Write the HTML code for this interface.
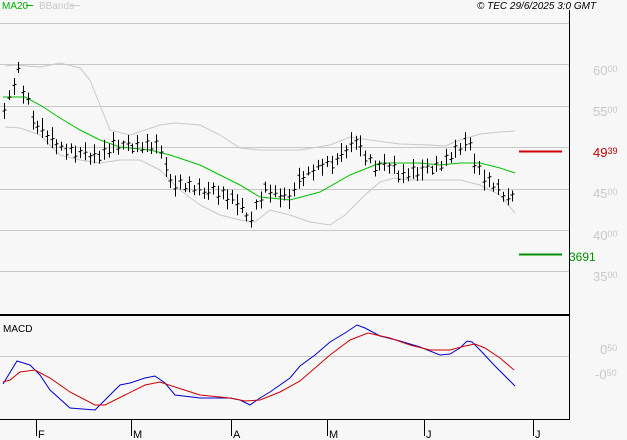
<!DOCTYPE html>
<html><head><meta charset="utf-8"><style>
body{margin:0;background:#f7f7f7;width:627px;height:440px;overflow:hidden;font-family:"Liberation Sans",sans-serif}
svg{display:block}
</style></head><body>
<svg id="s" width="627" height="440" xmlns="http://www.w3.org/2000/svg" font-family="Liberation Sans, sans-serif">
<rect width="627" height="440" fill="#f7f7f7"/>
<g stroke="#c8c8c8" stroke-width="1">
<line x1="0" y1="23.5" x2="569" y2="23.5"/>
<line x1="0" y1="64.5" x2="569" y2="64.5"/>
<line x1="0" y1="106.5" x2="569" y2="106.5"/>
<line x1="0" y1="147.5" x2="569" y2="147.5"/>
<line x1="0" y1="189.5" x2="569" y2="189.5"/>
<line x1="0" y1="230.5" x2="569" y2="230.5"/>
<line x1="0" y1="271.5" x2="569" y2="271.5"/>
<line x1="0" y1="356.5" x2="569" y2="356.5"/>
</g>
<g fill="#c8c8c8" font-size="13">
<text x="593" y="75">60<tspan font-size="9" dy="-3">00</tspan></text>
<text x="593" y="116">55<tspan font-size="9" dy="-3">00</tspan></text>
<text x="593" y="198">45<tspan font-size="9" dy="-3">00</tspan></text>
<text x="593" y="240">40<tspan font-size="9" dy="-3">00</tspan></text>
<text x="593" y="281">35<tspan font-size="9" dy="-3">00</tspan></text>
<text x="600" y="354">0<tspan font-size="9" dy="-3">50</tspan></text>
<text x="595" y="379">-0<tspan font-size="9" dy="-3">50</tspan></text>
</g>
<text x="593" y="157" fill="#c00000" font-size="13">49<tspan font-size="9" dy="-3">39</tspan></text>
<text x="569" y="261" fill="#009000" font-size="12">3691</text>
<line x1="519" y1="151.5" x2="562" y2="151.5" stroke="#d00000" stroke-width="2"/>
<line x1="519" y1="254.5" x2="562" y2="254.5" stroke="#009000" stroke-width="2"/>
<polyline fill="none" stroke="#c8c8c8" points="5,66 15,65 40,67 60,63 80,68 90,80 100,105 110,130 130,135 145,130 160,125 175,123 200,125 220,135 240,148 260,150 300,150 330,145 350,137 370,140 400,144 430,145 445,146 460,140 480,134 500,132 515,131"/>
<polyline fill="none" stroke="#c8c8c8" points="5,127 20,128 40,135 50,145 60,155 80,160 100,163 120,160 140,160 150,165 160,170 180,190 200,205 220,215 240,220 255,222 270,210 290,215 310,222 330,225 345,215 355,205 365,195 380,182 395,178 410,180 430,180 460,180 480,185 500,195 515,213"/>
<polyline fill="none" stroke="#00c000" points="3,97 25,97 40,105 60,118 80,130 100,140 120,147 150,150 170,155 200,165 220,175 240,185 260,197 290,200 320,192 350,175 380,163 420,163 440,165 460,163 480,163 500,168 515,173"/>
<g id="bars" stroke="#000" stroke-width="1" fill="none"></g>
<line x1="0" y1="315" x2="570" y2="315" stroke="#000" stroke-width="2"/>
<line x1="569.5" y1="10" x2="569.5" y2="420" stroke="#000"/>
<line x1="0" y1="419.5" x2="570" y2="419.5" stroke="#000"/>
<text x="3" y="332" font-size="10" fill="#000">MACD</text>
<polyline fill="none" stroke="#0000d0" points="3,384 17,361 30,365 40,375 50,390 70,408 95,410 105,400 120,385 130,383 145,378 155,376 165,383 175,395 200,398 230,398 240,400 250,405 260,398 270,392 280,385 290,378 300,366 315,355 330,342 345,333 357,325 365,328 380,336 400,341 420,347 440,355 450,354 460,348 467,341 472,342 480,350 495,366 515,386"/>
<polyline fill="none" stroke="#d00000" points="3,382 10,380 20,372 35,370 50,378 70,392 95,405 105,405 125,395 145,385 160,382 175,387 200,395 230,398 245,401 260,400 280,392 300,381 315,368 330,355 350,340 368,333 390,338 410,345 430,350 450,350 465,346 475,344 485,348 500,358 514,370"/>
<g stroke="#000"><line x1="36.5" y1="420" x2="36.5" y2="436"/><line x1="131.5" y1="420" x2="131.5" y2="436"/><line x1="231.5" y1="420" x2="231.5" y2="436"/><line x1="327.5" y1="420" x2="327.5" y2="436"/><line x1="424.5" y1="420" x2="424.5" y2="436"/><line x1="533.5" y1="420" x2="533.5" y2="436"/></g>
<g font-size="11" fill="#000"><text x="38" y="438">F</text><text x="133" y="438">M</text><text x="233" y="438">A</text><text x="329" y="438">M</text><text x="426" y="438">J</text><text x="535" y="438">J</text></g>
<text x="2" y="9" font-size="10" fill="#00b000">MA20</text><line x1="26" y1="5.5" x2="33" y2="5.5" stroke="#00b000"/>
<text x="39" y="9" font-size="10" fill="#c8c8c8">BBands</text><line x1="70" y1="5.5" x2="80" y2="5.5" stroke="#c8c8c8"/>
<text x="477" y="9" font-size="10" font-style="italic" fill="#000">© TEC 29/6/2025 3:0 GMT</text>
</svg>
<script>
var k=[[4,110],[10,95],[15,80],[18,68],[22,90],[28,100],[35,125],[45,135],[60,148],[75,150],[90,158],[100,155],[115,142],[130,148],[145,145],[160,145],[165,165],[170,185],[180,185],[200,188],[220,195],[235,200],[245,210],[250,222],[255,210],[265,190],[280,195],[290,195],[300,180],[320,165],[340,158],[355,140],[365,155],[375,165],[395,168],[400,178],[410,170],[430,170],[440,165],[450,155],[460,145],[467,140],[475,165],[485,180],[495,185],[505,195],[512,200]];
function f(x){for(var i=1;i<k.length;i++){if(x<=k[i][0]){var a=k[i-1],b=k[i];return a[1]+(b[1]-a[1])*(x-a[0])/(b[0]-a[0]);}}return k[k.length-1][1];}
var s="";var n=0;
for(var x=4;x<=514;x+=4.75){n++;var xi=Math.round(x)+0.5;var c=f(x);var r=9+((n*7)%13);var o=((n*5)%9)-4;
var h=c-r/2+o,l=c+r/2+o;var op=c+o+((n*3)%7)-3;var cl=c+o-((n*4)%7)+3;
s+='<line x1="'+xi+'" y1="'+h+'" x2="'+xi+'" y2="'+l+'"/><line x1="'+(xi-2)+'" y1="'+op+'" x2="'+xi+'" y2="'+op+'"/><line x1="'+xi+'" y1="'+cl+'" x2="'+(xi+2)+'" y2="'+cl+'"/>';}
document.getElementById('bars').innerHTML=s;
</script>
</body></html>
